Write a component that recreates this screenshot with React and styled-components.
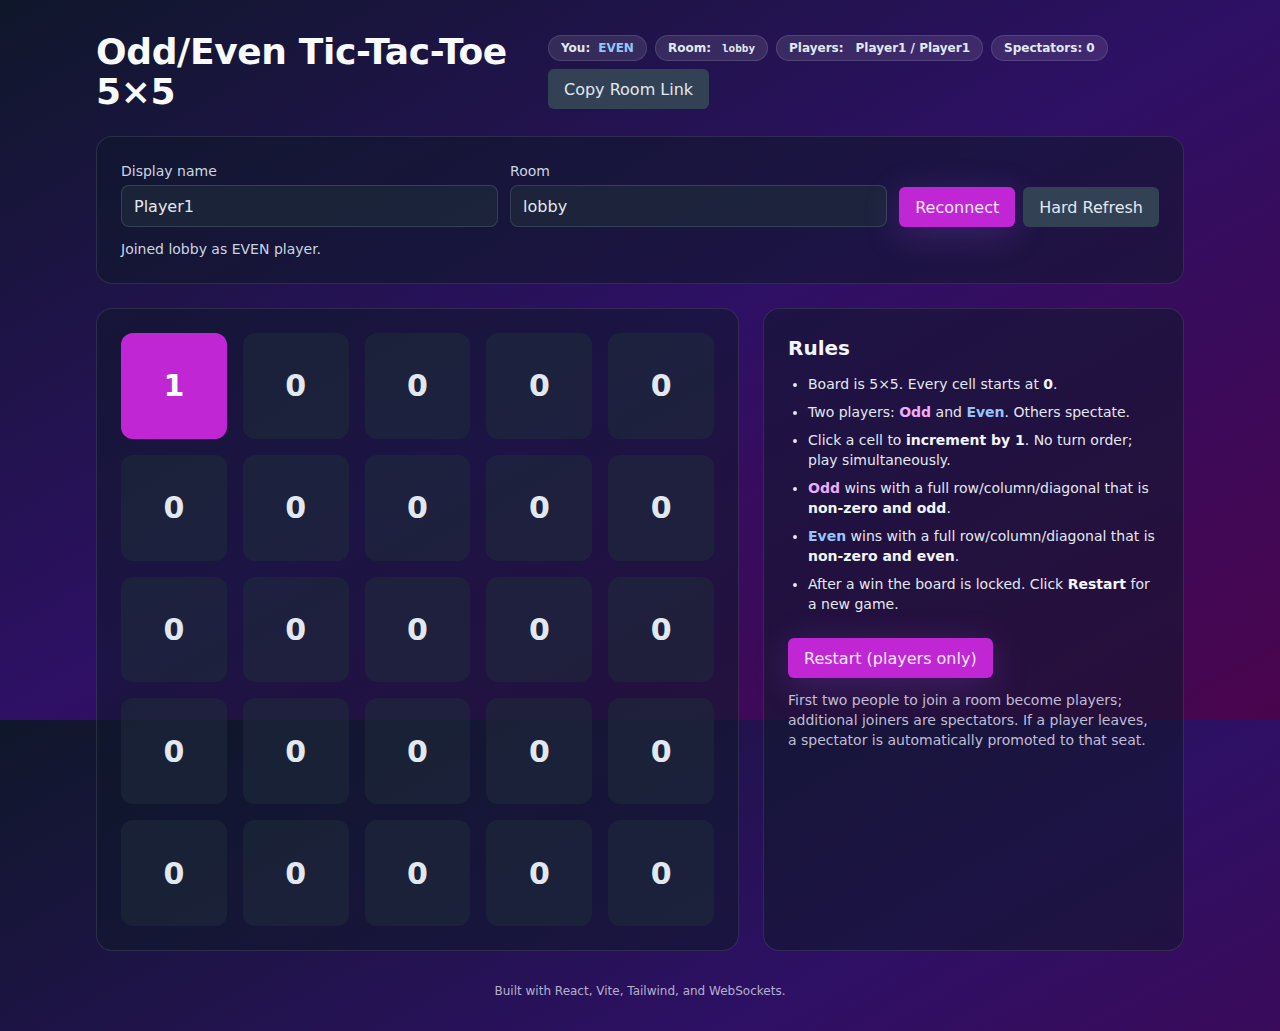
import React from 'react';
import styled, { createGlobalStyle } from 'styled-components';

const GlobalStyle = createGlobalStyle`
  html {
    background-color: #0f172a;
    background-image: linear-gradient(to bottom right, #0f172a, #2e1065, #4a044e);
    background-size: 100% 720px;
    background-repeat: repeat;
  }
  body {
    margin: 0;
    font-family: "DejaVu Sans", "Noto Sans", sans-serif;
    color: #e2e8f0;
  }
  * { box-sizing: border-box; }
`;

const Page = styled.div`
  max-width: 1152px;
  margin: 0 auto;
  padding: 32px 32px 28px;
`;

const Header = styled.header`
  display: flex;
  align-items: flex-start;
  gap: 32px;
`;

const Title = styled.h1`
  flex: 0 0 auto;
  max-width: 420px;
  margin: 0;
  font-size: 36px;
  line-height: 40px;
  font-weight: 700;
  letter-spacing: -0.35px;
  color: #f8fafc;
`;

const Meta = styled.div`
  flex: 1;
  display: flex;
  flex-wrap: wrap;
  gap: 8px;
  padding-top: 3px;
`;

const Badge = styled.span`
  display: inline-flex;
  align-items: center;
  gap: ${(p) => p.$gap || 10}px;
  height: 26px;
  padding: 0 12px;
  border-radius: 999px;
  border: 1px solid rgba(255, 255, 255, 0.12);
  background: rgba(255, 255, 255, 0.1);
  font-size: 12px;
  font-weight: 700;
  color: #e2e8f0;
`;

const BadgeValue = styled.span`
  color: ${(p) => p.$color || '#e2e8f0'};
  font-family: ${(p) => (p.$mono ? '"DejaVu Sans Mono", monospace' : 'inherit')};
  font-size: ${(p) => (p.$mono ? '11px' : '12px')};
`;

const Button = styled.button`
  height: 40px;
  padding: 0 16px;
  border: none;
  border-radius: 6px;
  font-family: inherit;
  font-size: 16px;
  cursor: pointer;
  color: ${(p) => (p.$accent ? '#fae8ff' : '#e2e8f0')};
  background: ${(p) => (p.$accent ? '#c026d3' : '#334155')};
  box-shadow: ${(p) => (p.$accent ? '0 8px 36px rgba(168, 85, 247, 0.22)' : 'none')};
`;

const Panel = styled.section`
  border: 1px solid rgba(255, 255, 255, 0.1);
  border-radius: 16px;
  background: rgba(15, 23, 42, 0.55);
  padding: 24px;
`;

const ConnectPanel = styled(Panel)`
  margin-top: 24px;
`;

const ConnectRow = styled.div`
  display: grid;
  grid-template-columns: 1fr 1fr auto auto;
  align-items: end;
  gap: 12px;
  & > button + button { margin-left: -4px; }
`;

const Field = styled.label`
  display: flex;
  flex-direction: column;
  gap: 4px;
`;

const Label = styled.span`
  font-size: 14px;
  line-height: 20px;
  color: #cbd5e1;
`;

const Input = styled.input`
  height: 42px;
  padding: 0 12px;
  border-radius: 8px;
  border: 1px solid rgba(71, 85, 105, 0.6);
  background: rgba(30, 41, 59, 0.7);
  color: #e2e8f0;
  font-family: inherit;
  font-size: 16px;
  outline: none;
`;

const Status = styled.p`
  margin: 12px 0 0;
  font-size: 14px;
  line-height: 20px;
  color: #cbd5e1;
`;

const Main = styled.main`
  display: grid;
  grid-template-columns: 1fr 421px;
  gap: 24px;
  margin-top: 24px;
`;

const Board = styled.div`
  display: grid;
  grid-template-columns: repeat(5, 1fr);
  gap: 16px;
`;

const Cell = styled.button`
  aspect-ratio: 1 / 1;
  border: none;
  border-radius: 12px;
  font-family: inherit;
  font-size: 30px;
  font-weight: 700;
  cursor: pointer;
  color: ${(p) => (p.$on ? '#ffffff' : '#e2e8f0')};
  background: ${(p) => (p.$on ? '#c026d3' : 'rgba(30, 41, 59, 0.6)')};
`;

const RulesTitle = styled.h2`
  margin: 1px 0 12px;
  font-size: 20px;
  line-height: 28px;
  font-weight: 700;
  color: #f1f5f9;
`;

const RuleList = styled.ul`
  margin: 0;
  padding-left: 20px;
  list-style: disc;
  font-size: 14px;
  line-height: 20px;
  color: #e2e8f0;
  li + li { margin-top: 8px; }
  b { font-weight: 700; color: #f1f5f9; }
`;

const Tag = styled.b`
  && { color: ${(p) => p.$color}; }
`;

const RestartButton = styled(Button)`
  margin-top: 24px;
`;

const Note = styled.p`
  margin: 12px 0 0;
  font-size: 14px;
  line-height: 20px;
  color: #c0bdd4;
`;

const Footer = styled.footer`
  margin-top: 32px;
  text-align: center;
  font-size: 12px;
  line-height: 16px;
  color: #b4b0cc;
`;

const ODD = '#f0abfc';
const EVEN = '#93c5fd';

const cells = Array.from({ length: 25 }, (_, i) => (i === 0 ? 1 : 0));

export default function App() {
  return (
    <>
      <GlobalStyle />
      <Page>
        <Header>
          <Title>Odd/Even Tic-Tac-Toe 5×5</Title>
          <Meta>
            <Badge $gap={8}>
              You:<BadgeValue $color={EVEN}>EVEN</BadgeValue>
            </Badge>
            <Badge $gap={11}>
              Room:<BadgeValue $mono>lobby</BadgeValue>
            </Badge>
            <Badge $gap={12}>
              Players:<BadgeValue>Player1 / Player1</BadgeValue>
            </Badge>
            <Badge>Spectators: 0</Badge>
            <Button>Copy Room Link</Button>
          </Meta>
        </Header>

        <ConnectPanel>
          <ConnectRow>
            <Field>
              <Label>Display name</Label>
              <Input defaultValue="Player1" />
            </Field>
            <Field>
              <Label>Room</Label>
              <Input defaultValue="lobby" />
            </Field>
            <Button $accent>Reconnect</Button>
            <Button>Hard Refresh</Button>
          </ConnectRow>
          <Status>Joined lobby as EVEN player.</Status>
        </ConnectPanel>

        <Main>
          <Panel>
            <Board>
              {cells.map((v, i) => (
                <Cell key={i} $on={v > 0}>{v}</Cell>
              ))}
            </Board>
          </Panel>
          <Panel>
            <RulesTitle>Rules</RulesTitle>
            <RuleList>
              <li>Board is 5×5. Every cell starts at <b>0</b>.</li>
              <li>
                Two players: <Tag $color={ODD}>Odd</Tag> and <Tag $color={EVEN}>Even</Tag>. Others spectate.
              </li>
              <li>
                Click a cell to <b>increment by 1</b>. No turn order; play simultaneously.
              </li>
              <li>
                <Tag $color={ODD}>Odd</Tag> wins with a full row/column/diagonal that is <b>non-zero and odd</b>.
              </li>
              <li>
                <Tag $color={EVEN}>Even</Tag> wins with a full row/column/diagonal that is <b>non-zero and even</b>.
              </li>
              <li>
                After a win the board is locked. Click <b>Restart</b> for a new game.
              </li>
            </RuleList>
            <RestartButton $accent>Restart (players only)</RestartButton>
            <Note>
              First two people to join a room become players; additional joiners are spectators. If a player
              leaves, a spectator is automatically promoted to that seat.
            </Note>
          </Panel>
        </Main>

        <Footer>Built with React, Vite, Tailwind, and WebSockets.</Footer>
      </Page>
    </>
  );
}
